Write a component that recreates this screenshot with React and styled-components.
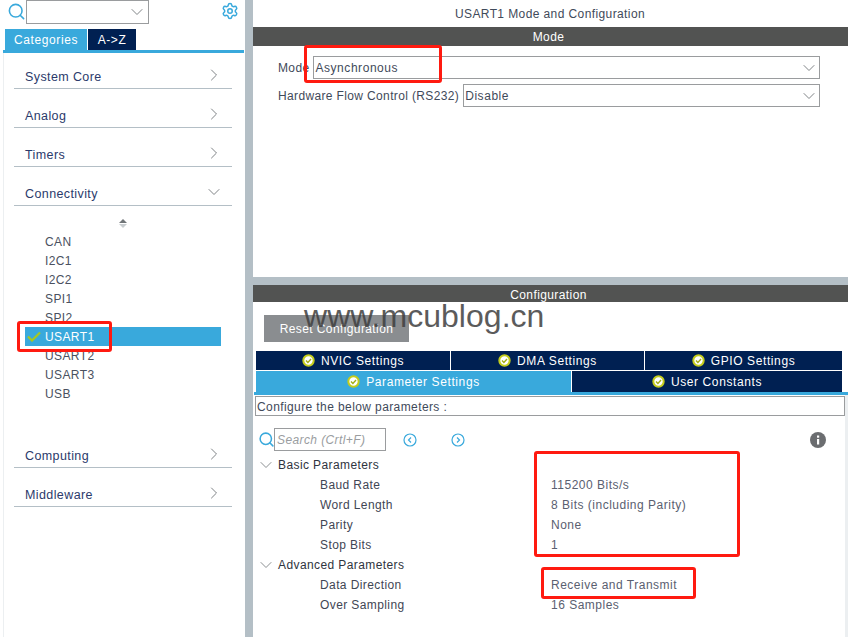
import styled, { createGlobalStyle } from 'styled-components';
import { ChevronDown, ChevronRight, Search, Settings } from 'lucide-react';

const GlobalStyle = createGlobalStyle`
    html, body {
        margin: 0;
        padding: 0;
        background: #fff;
    }
    body {
        font-family: "Liberation Sans", Arial, sans-serif;
        font-size: 12px;
        color: #3f4a5a;
        letter-spacing: 0.4px;
    }
`;

const Page = styled.div`
    position: relative;
    width: 848px;
    height: 637px;
    overflow: hidden;
    display: flex;
`;

const Sidebar = styled.aside`
    width: 245px;
    flex: none;
    display: flex;
    flex-direction: column;
`;

const SearchRow = styled.div`
    height: 29px;
    display: flex;
    align-items: flex-start;
    padding-left: 7px;
    color: #39a9dc;
    > svg {
        margin-top: 2px;
    }
`;

const SearchCombo = styled.div`
    width: 120px;
    height: 22px;
    border: 1px solid #9a9c9e;
    display: flex;
    align-items: center;
    justify-content: flex-end;
    padding-right: 1px;
    color: #808487;
`;

const GearSlot = styled.div`
    margin: 2px 0 0 72px;
    height: 18px;
`;

const TabRow = styled.div`
    display: flex;
    gap: 1px;
    padding-left: 5px;
    height: 21px;
`;

const SideTab = styled.div`
    width: ${p => p.$width}px;
    background: ${p => (p.$active ? '#39a9dc' : '#002052')};
    color: #fff;
    display: flex;
    align-items: center;
    justify-content: center;
    letter-spacing: 0.6px;
`;

const TabLine = styled.div`
    height: 3px;
    margin: 0 1px 0 3px;
    background: #39a9dc;
`;

const CategoryPanel = styled.div`
    flex: 1;
    margin-left: 3px;
    border-left: 1px solid #eceff1;
    padding: 0 13px 0 10px;
`;

const Category = styled.div`
    height: 38px;
    border-bottom: 1px solid #b4bfc6;
    display: flex;
    align-items: flex-end;
    justify-content: space-between;
    padding: 0 8px 0 11px;
    font-size: 12.5px;
    color: #2b3a6b;
    &:first-child {
        height: 35px;
    }
    span {
        padding-bottom: 4px;
    }
    svg {
        margin-bottom: 3px;
        color: #808487;
    }
`;

const SortMark = styled.div`
    height: 18px;
    padding-top: 8px;
    display: flex;
    flex-direction: column;
    align-items: center;
    justify-content: center;
    gap: 1px;
    &::before, &::after {
        content: '';
        width: 0;
        height: 0;
        border-left: 4px solid transparent;
        border-right: 4px solid transparent;
    }
    &::before {
        border-bottom: 4px solid #707578;
    }
    &::after {
        border-top: 4px solid #c8cdd0;
    }
`;

const PeripheralList = styled.div`
    margin-bottom: 26px;
`;

const Peripheral = styled.div`
    height: 19px;
    margin: 0 11px;
    padding-left: 20px;
    display: flex;
    align-items: center;
    position: relative;
    color: ${p => (p.$selected ? '#fff' : '#4a5160')};
    background: ${p => (p.$selected ? '#39a9dc' : 'transparent')};
`;

const CheckMark = styled.svg`
    position: absolute;
    left: 2px;
    top: 4px;
`;

const Splitter = styled.div`
    width: 8px;
    flex: none;
    background: #b4bfc6;
`;

const Main = styled.main`
    flex: 1;
    display: flex;
    flex-direction: column;
    min-width: 0;
`;

const ModePane = styled.section`
    height: 277px;
    flex: none;
`;

const PaneTitle = styled.div`
    height: 27px;
    display: flex;
    align-items: center;
    justify-content: center;
    padding-right: 1px;
    color: #3f4a5a;
`;

const DarkHeader = styled.div`
    height: ${p => p.$height}px;
    box-sizing: border-box;
    padding: ${p => p.$shift}px 4px 0 0;
    background: #525352;
    color: #fff;
    display: flex;
    align-items: center;
    justify-content: center;
`;

const FormGrid = styled.div`
    padding: 10px 28px 0 25px;
    display: flex;
    flex-direction: column;
    gap: 5px;
    letter-spacing: 0.36px;
`;

const FormRow = styled.div`
    display: flex;
    align-items: center;
    gap: 4px;
`;

const Select = styled.div`
    flex: 1;
    height: 21px;
    border: 1px solid #9a9c9e;
    padding-left: 1px;
    display: flex;
    align-items: center;
    justify-content: space-between;
    letter-spacing: 0.55px;
    svg {
        color: #808487;
    }
`;

const HSplitter = styled.div`
    height: 8px;
    flex: none;
    background: #b4bfc6;
`;

const ConfigPane = styled.section`
    flex: 1;
    display: flex;
    flex-direction: column;
`;

const ResetButton = styled.div`
    width: 145px;
    height: 27px;
    margin: 13px 0 9px 11px;
    background: #8a8d90;
    color: #fff;
    display: flex;
    align-items: center;
    justify-content: center;
`;

const TabGrid = styled.div`
    display: flex;
    gap: 1px;
    margin: ${p => (p.$top ? '0 6px 1px 3px' : '0 6px 0 3px')};
    height: ${p => (p.$top ? 19 : 21)}px;
`;

const ConfigTab = styled.div`
    flex: ${p => p.$grow} 1 0;
    min-width: 0;
    background: ${p => (p.$active ? '#39a9dc' : '#002052')};
    color: #fff;
    display: flex;
    align-items: center;
    justify-content: center;
    gap: 6px;
    letter-spacing: 0.6px;
`;

const BlueRule = styled.div`
    height: 3px;
    background: #39a9dc;
    margin-left: 1px;
`;

const ParamsBody = styled.div`
    flex: 1;
    margin-left: 1px;
    border-right: 3px solid #eceff1;
    padding: 1px 0 0 1px;
`;

const Hint = styled.div`
    height: 17px;
    border: 1px solid #9a9c9e;
    display: flex;
    align-items: center;
    padding: 1px 0 0 1px;
`;

const ToolRow = styled.div`
    display: flex;
    align-items: center;
    height: 23px;
    margin-top: 12px;
    padding-left: 3px;
    color: #39a9dc;
`;

const ParamSearch = styled.div`
    width: 108px;
    height: 21px;
    margin-left: -1px;
    border: 1px solid #9a9c9e;
    padding-left: 2px;
    display: flex;
    align-items: center;
    font-style: italic;
    color: #9a9da0;
`;

const RoundNav = styled.svg`
    margin-left: ${p => p.$gap}px;
`;

const InfoMark = styled.svg`
    margin-left: 345px;
`;

const Tree = styled.div`
    margin-top: 4px;
`;

const TreeRow = styled.div`
    height: 20px;
    display: flex;
    align-items: center;
    padding-left: ${p => (p.$group ? 1 : 65)}px;
    color: ${p => (p.$group ? '#2f3440' : '#3f4654')};
    svg {
        color: #808487;
        margin-right: 2px;
    }
`;

const ParamName = styled.span`
    width: 231px;
    flex: none;
`;

const ParamValue = styled.span`
    color: #5a6070;
    letter-spacing: 0.5px;
`;

const Annotation = styled.div`
    position: absolute;
    left: ${p => p.$x}px;
    top: ${p => p.$y}px;
    width: ${p => p.$w}px;
    height: ${p => p.$h}px;
    box-sizing: border-box;
    border: 3px solid #ff1a10;
    border-radius: 3px;
`;

const Watermark = styled.div`
    position: absolute;
    left: 304px;
    top: 298px;
    font-size: 32px;
    letter-spacing: 0.02px;
    color: #3f3f3f;
    opacity: 0.85;
`;

const Tick = () => (
    <svg width="13" height="13" viewBox="0 0 13 13">
        <circle cx="6.5" cy="6.5" r="5.2" fill="#fff" stroke="#c3cc1c" strokeWidth="2" />
        <path d="M4 6.5l1.9 1.9 3.1-3.3" fill="none" stroke="#a3ad14" strokeWidth="1.4" />
    </svg>
);

const categoriesTop = ['System Core', 'Analog', 'Timers'];
const peripherals = ['CAN', 'I2C1', 'I2C2', 'SPI1', 'SPI2', 'USART1', 'USART2', 'USART3', 'USB'];

const App = () => {
    return (
        <Page>
            <GlobalStyle />
            <Sidebar>
                <SearchRow>
                    <Search size={19} strokeWidth={2} />
                    <SearchCombo><ChevronDown size={20} strokeWidth={1.2} /></SearchCombo>
                    <GearSlot><Settings size={18} strokeWidth={2} /></GearSlot>
                </SearchRow>
                <TabRow>
                    <SideTab $active $width={82}>Categories</SideTab>
                    <SideTab $width={48}>A-&gt;Z</SideTab>
                </TabRow>
                <TabLine />
                <CategoryPanel>
                    {categoriesTop.map(name => (
                        <Category key={name}>
                            <span>{name}</span>
                            <ChevronRight size={20} strokeWidth={1.2} />
                        </Category>
                    ))}
                    <Category>
                        <span>Connectivity</span>
                        <ChevronDown size={20} strokeWidth={1.2} />
                    </Category>
                    <SortMark />
                    <PeripheralList>
                        {peripherals.map(name => (
                            <Peripheral key={name} $selected={name === 'USART1'}>
                                {name === 'USART1' && (
                                    <CheckMark width="14" height="11" viewBox="0 0 14 11">
                                        <path d="M1 5.5l4 4 8-8" fill="none" stroke="#a8c81e" strokeWidth="2.2" />
                                    </CheckMark>
                                )}
                                {name}
                            </Peripheral>
                        ))}
                    </PeripheralList>
                    <Category>
                        <span>Computing</span>
                        <ChevronRight size={20} strokeWidth={1.2} />
                    </Category>
                    <Category>
                        <span>Middleware</span>
                        <ChevronRight size={20} strokeWidth={1.2} />
                    </Category>
                </CategoryPanel>
            </Sidebar>
            <Splitter />
            <Main>
                <ModePane>
                    <PaneTitle>USART1 Mode and Configuration</PaneTitle>
                    <DarkHeader $height={19} $shift={0}>Mode</DarkHeader>
                    <FormGrid>
                        <FormRow>
                            <span>Mode</span>
                            <Select>Asynchronous<ChevronDown size={20} strokeWidth={1.2} /></Select>
                        </FormRow>
                        <FormRow>
                            <span>Hardware Flow Control (RS232)</span>
                            <Select>Disable<ChevronDown size={20} strokeWidth={1.2} /></Select>
                        </FormRow>
                    </FormGrid>
                </ModePane>
                <HSplitter />
                <ConfigPane>
                    <DarkHeader $height={17} $shift={2}>Configuration</DarkHeader>
                    <ResetButton>Reset Configuration</ResetButton>
                    <TabGrid $top>
                        <ConfigTab $grow={194}><Tick />NVIC Settings</ConfigTab>
                        <ConfigTab $grow={193}><Tick />DMA Settings</ConfigTab>
                        <ConfigTab $grow={197}><Tick />GPIO Settings</ConfigTab>
                    </TabGrid>
                    <TabGrid>
                        <ConfigTab $active $grow={315}><Tick />Parameter Settings</ConfigTab>
                        <ConfigTab $grow={270}><Tick />User Constants</ConfigTab>
                    </TabGrid>
                    <BlueRule />
                    <ParamsBody>
                        <Hint>Configure the below parameters :</Hint>
                        <ToolRow>
                            <Search size={17} strokeWidth={2.2} />
                            <ParamSearch>Search (Crtl+F)</ParamSearch>
                            <RoundNav $gap={17} width="14" height="14" viewBox="0 0 14 14">
                                <circle cx="7" cy="7" r="6" fill="none" stroke="#39a9dc" strokeWidth="1.2" />
                                <path d="M8 4.5L5.5 7 8 9.5" fill="none" stroke="#39a9dc" strokeWidth="1.2" />
                            </RoundNav>
                            <RoundNav $gap={34} width="14" height="14" viewBox="0 0 14 14">
                                <circle cx="7" cy="7" r="6" fill="none" stroke="#39a9dc" strokeWidth="1.2" />
                                <path d="M6 4.5L8.5 7 6 9.5" fill="none" stroke="#39a9dc" strokeWidth="1.2" />
                            </RoundNav>
                            <InfoMark width="16" height="16" viewBox="0 0 16 16">
                                <circle cx="8" cy="8" r="8" fill="#6b6d70" />
                                <rect x="7" y="7" width="2.2" height="5.5" fill="#fff" />
                                <rect x="7" y="3.5" width="2.2" height="2.2" fill="#fff" />
                            </InfoMark>
                        </ToolRow>
                        <Tree>
                            <TreeRow $group><ChevronDown size={20} strokeWidth={1.1} />Basic Parameters</TreeRow>
                            <TreeRow><ParamName>Baud Rate</ParamName><ParamValue>115200 Bits/s</ParamValue></TreeRow>
                            <TreeRow><ParamName>Word Length</ParamName><ParamValue>8 Bits (including Parity)</ParamValue></TreeRow>
                            <TreeRow><ParamName>Parity</ParamName><ParamValue>None</ParamValue></TreeRow>
                            <TreeRow><ParamName>Stop Bits</ParamName><ParamValue>1</ParamValue></TreeRow>
                            <TreeRow $group><ChevronDown size={20} strokeWidth={1.1} />Advanced Parameters</TreeRow>
                            <TreeRow><ParamName>Data Direction</ParamName><ParamValue>Receive and Transmit</ParamValue></TreeRow>
                            <TreeRow><ParamName>Over Sampling</ParamName><ParamValue>16 Samples</ParamValue></TreeRow>
                        </Tree>
                    </ParamsBody>
                </ConfigPane>
            </Main>
            <Watermark>www.mcublog.cn</Watermark>
            <Annotation $x={304} $y={45} $w={138} $h={38} />
            <Annotation $x={17} $y={321} $w={95} $h={31} />
            <Annotation $x={534} $y={451} $w={206} $h={106} />
            <Annotation $x={541} $y={567} $w={155} $h={32} />
        </Page>
    );
};

export default App;
